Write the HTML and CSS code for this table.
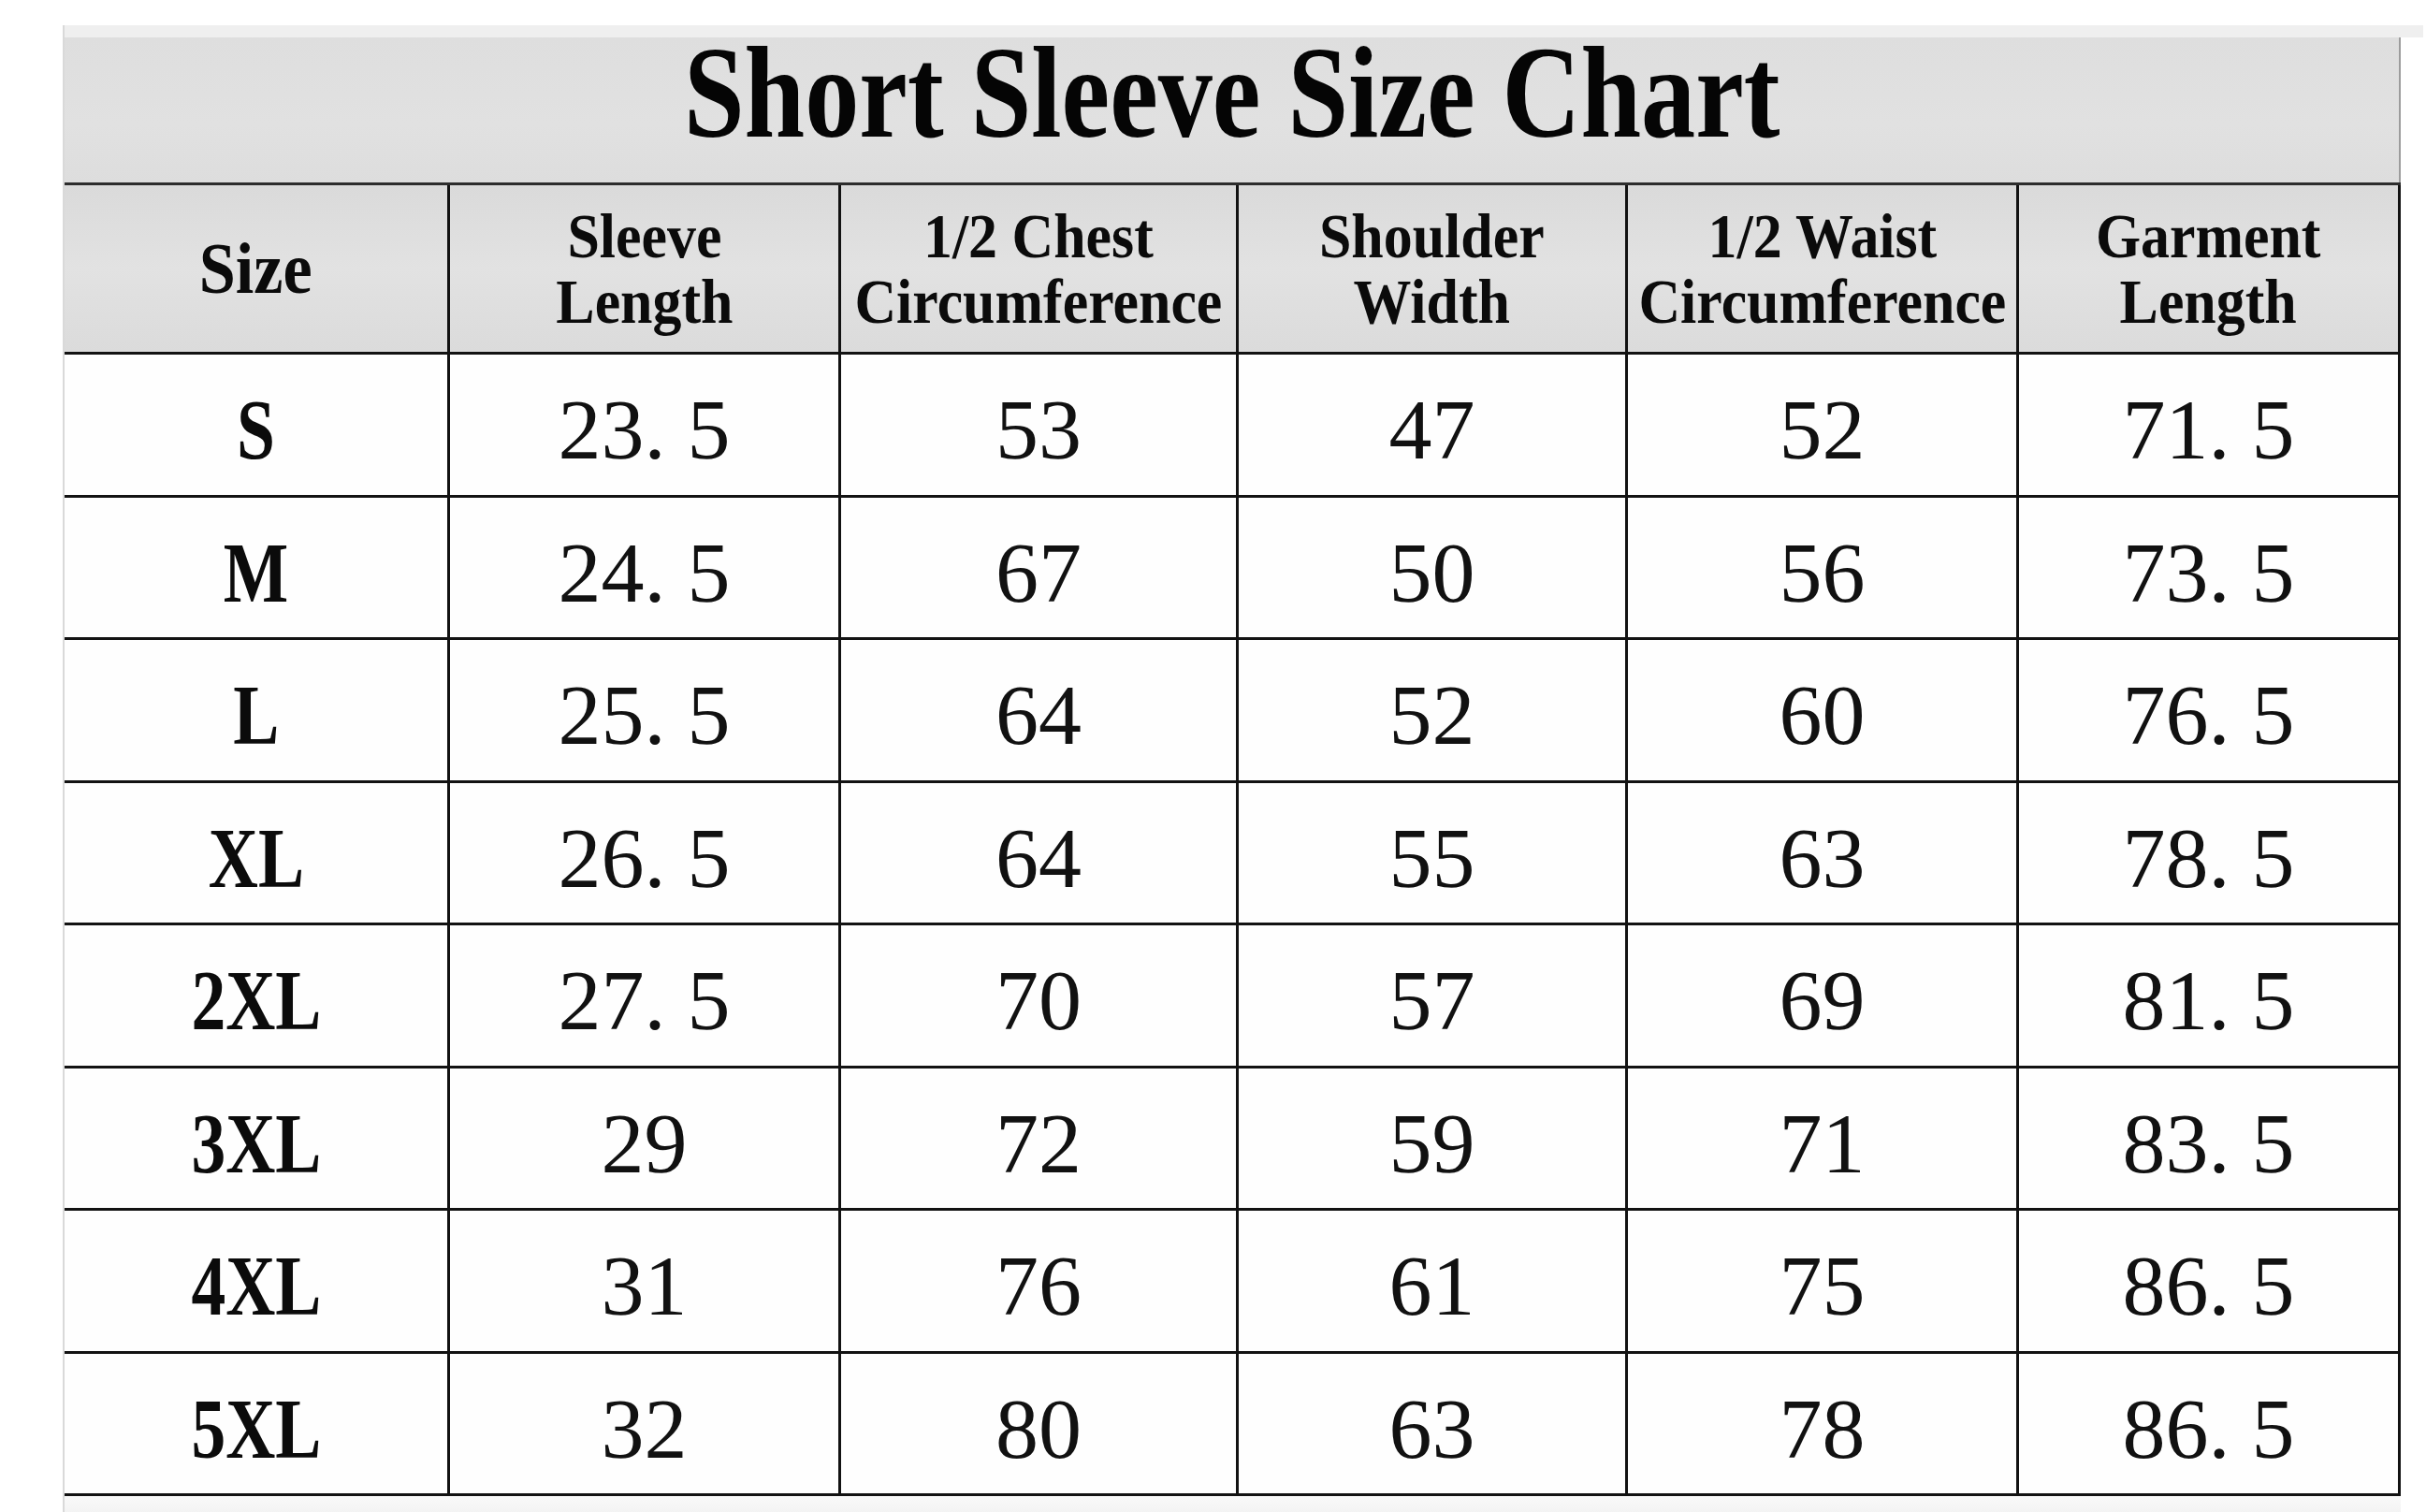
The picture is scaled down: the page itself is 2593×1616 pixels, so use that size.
FILE: index.html
```html
<!DOCTYPE html>
<html lang="en">
<head>
<meta charset="utf-8">
<title>Short Sleeve Size Chart</title>
<link rel="stylesheet" href="styles.css">
</head>
<body>
<div class="page">
  <div class="chart">
    <div class="strip"></div>
    <div class="title"><h1><span>Short Sleeve Size Chart</span></h1></div>
    <div class="grid">
      <div class="cell head"><span class="hsize">Size</span></div>
      <div class="cell head"><span class="htext">Sleeve<br>Length</span></div>
      <div class="cell head"><span class="htext">1/2 Chest<br>Circumference</span></div>
      <div class="cell head"><span class="htext">Shoulder<br>Width</span></div>
      <div class="cell head"><span class="htext">1/2 Waist<br>Circumference</span></div>
      <div class="cell head"><span class="htext">Garment<br>Length</span></div>

      <div class="cell body"><span class="sz">S</span></div>
      <div class="cell body"><span class="num">23. 5</span></div>
      <div class="cell body"><span class="num">53</span></div>
      <div class="cell body"><span class="num">47</span></div>
      <div class="cell body"><span class="num">52</span></div>
      <div class="cell body"><span class="num">71. 5</span></div>

      <div class="cell body"><span class="sz">M</span></div>
      <div class="cell body"><span class="num">24. 5</span></div>
      <div class="cell body"><span class="num">67</span></div>
      <div class="cell body"><span class="num">50</span></div>
      <div class="cell body"><span class="num">56</span></div>
      <div class="cell body"><span class="num">73. 5</span></div>

      <div class="cell body"><span class="sz">L</span></div>
      <div class="cell body"><span class="num">25. 5</span></div>
      <div class="cell body"><span class="num">64</span></div>
      <div class="cell body"><span class="num">52</span></div>
      <div class="cell body"><span class="num">60</span></div>
      <div class="cell body"><span class="num">76. 5</span></div>

      <div class="cell body"><span class="sz">XL</span></div>
      <div class="cell body"><span class="num">26. 5</span></div>
      <div class="cell body"><span class="num">64</span></div>
      <div class="cell body"><span class="num">55</span></div>
      <div class="cell body"><span class="num">63</span></div>
      <div class="cell body"><span class="num">78. 5</span></div>

      <div class="cell body"><span class="sz">2XL</span></div>
      <div class="cell body"><span class="num">27. 5</span></div>
      <div class="cell body"><span class="num">70</span></div>
      <div class="cell body"><span class="num">57</span></div>
      <div class="cell body"><span class="num">69</span></div>
      <div class="cell body"><span class="num">81. 5</span></div>

      <div class="cell body"><span class="sz">3XL</span></div>
      <div class="cell body"><span class="num">29</span></div>
      <div class="cell body"><span class="num">72</span></div>
      <div class="cell body"><span class="num">59</span></div>
      <div class="cell body"><span class="num">71</span></div>
      <div class="cell body"><span class="num">83. 5</span></div>

      <div class="cell body"><span class="sz">4XL</span></div>
      <div class="cell body"><span class="num">31</span></div>
      <div class="cell body"><span class="num">76</span></div>
      <div class="cell body"><span class="num">61</span></div>
      <div class="cell body"><span class="num">75</span></div>
      <div class="cell body"><span class="num">86. 5</span></div>

      <div class="cell body"><span class="sz">5XL</span></div>
      <div class="cell body"><span class="num">32</span></div>
      <div class="cell body"><span class="num">80</span></div>
      <div class="cell body"><span class="num">63</span></div>
      <div class="cell body"><span class="num">78</span></div>
      <div class="cell body"><span class="num">86. 5</span></div>
    </div>
    <div class="foot"></div>
  </div>
</div>
</body>
</html>
```

FILE: styles.css
```css
html, body {
  margin: 0;
  padding: 0;
  background: #ffffff;
}

body {
  width: 2593px;
  height: 1616px;
  overflow: hidden;
  font-family: "Liberation Serif", "Times New Roman", serif;
  color: #0b0b0b;
}

.page {
  padding: 27px 0 0 67px;
}

.chart {
  width: 2497px;
  border-left: 2px solid #d9d9d9;
}

.strip {
  height: 13px;
  background: #efefef;
  margin-right: -24px;
}

.title {
  box-sizing: border-box;
  height: 155px;
  background: linear-gradient(180deg, #dedede 0%, #e1e1e1 60%, #dddddd 100%);
  border-right: 2px solid #9c9c9c;
  text-align: center;
}

.title h1 {
  margin: 0;
  font-family: "Liberation Serif", "Times New Roman", serif;
  font-weight: bold;
  font-size: 140px;
  line-height: 117px;
  color: #050505;
}

.title h1 span {
  display: inline-block;
  transform: scaleX(0.83);
  transform-origin: center;
}

.grid {
  display: grid;
  grid-template-columns: 412px 418px 425px 416px 418px 408px;
  grid-template-rows: 181px repeat(8, 152.5px);
  border-top: 3px solid #2c2c2c;
}

.cell {
  box-sizing: border-box;
  border-right: 3px solid #121212;
  border-bottom: 3px solid #121212;
  display: flex;
  align-items: center;
  justify-content: center;
  text-align: center;
}

.head {
  background: linear-gradient(180deg, #dadada 0%, #e2e2e2 50%, #dbdbdb 100%);
}

.body {
  background: #fefefe;
  padding-top: 11px;
}

.hsize {
  display: inline-block;
  font-weight: bold;
  font-size: 78px;
  line-height: 78px;
  transform: scaleX(0.9);
}

.htext {
  display: inline-block;
  font-weight: bold;
  font-size: 68px;
  line-height: 70px;
  transform: scaleX(0.91);
  white-space: nowrap;
}

.sz {
  display: inline-block;
  font-weight: bold;
  font-size: 92px;
  line-height: 92px;
  transform: scaleX(0.8);
}

.num {
  display: inline-block;
  font-weight: normal;
  font-size: 92px;
  line-height: 92px;
  white-space: pre;
  color: #111111;
}

.foot {
  height: 18px;
  background: linear-gradient(180deg, #f9f9f9 0%, #f3f3f3 100%);
}
```
